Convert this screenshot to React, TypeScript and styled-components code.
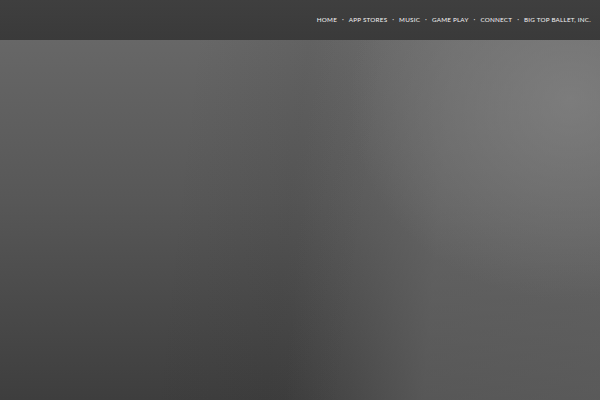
import React from "react";
import styled, { createGlobalStyle } from "styled-components";

const GlobalStyle = createGlobalStyle`
  html, body {
    margin: 0;
    padding: 0;
    height: 100%;
    background: #3d3d3d;
  }
  #root {
    height: 100%;
  }
`;

const Page = styled.div`
  display: flex;
  flex-direction: column;
  height: 100vh;
  font-family: Lato, "Noto Sans", sans-serif;
`;

const Header = styled.header`
  height: 40px;
  flex-shrink: 0;
  display: flex;
  align-items: center;
  justify-content: flex-end;
  padding-right: 9px;
  background: linear-gradient(to bottom, #3f3f3f 0%, #3a3a3a 100%);
`;

const Nav = styled.nav`
  display: flex;
  align-items: center;
  gap: 5px;
  margin-top: -1px;
`;

const NavLink = styled.a`
  color: #f4f4f4;
  font-size: 6.3px;
  font-weight: 400;
  letter-spacing: 0.22px;
  text-transform: uppercase;
  text-decoration: none;
  white-space: nowrap;
`;

const Dot = styled.span`
  color: #d8d8d8;
  font-size: 7px;
  line-height: 1;
`;

const Hero = styled.main`
  flex: 1;
  background:
    radial-gradient(ellipse 220px 200px at 570px 60px, rgba(135, 135, 135, 0.65) 0%, rgba(135, 135, 135, 0) 100%),
    linear-gradient(97deg, rgba(40, 40, 40, 0) 30%, rgba(40, 40, 40, 0.08) 48%, rgba(40, 40, 40, 0) 60%),
    linear-gradient(95deg, rgba(112, 112, 112, 0) 50%, rgba(112, 112, 112, 0.2) 60%, rgba(112, 112, 112, 0.5) 72%, rgba(108, 108, 108, 0.6) 100%),
    linear-gradient(to bottom, #676767 0%, #575757 45%, #3e3e3e 100%);
`;

const links = ["Home", "App Stores", "Music", "Game Play", "Connect", "Big Top Ballet, Inc."];

export default function App() {
  return (
    <>
      <GlobalStyle />
      <Page>
        <Header>
          <Nav>
            {links.map((link, i) => (
              <React.Fragment key={link}>
                {i > 0 && <Dot>·</Dot>}
                <NavLink href="#">{link}</NavLink>
              </React.Fragment>
            ))}
          </Nav>
        </Header>
        <Hero />
      </Page>
    </>
  );
}
